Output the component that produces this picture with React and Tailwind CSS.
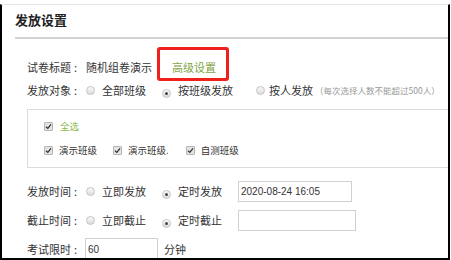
import React from "react";

const font = { fontFamily: '"Noto Sans CJK SC", "Noto Sans", sans-serif' };
const mono = { fontFamily: '"Liberation Sans", Arial, sans-serif' };

function Radio({ checked }) {
  return (
    <span className="relative inline-flex h-[9px] w-[9px] shrink-0 items-center justify-center rounded-full border border-[#c4c4c4] bg-gradient-to-b from-[#fafafa] to-[#dcdcdc]">
      {checked && <span className="h-[3px] w-[3px] rounded-full bg-[#444]" />}
    </span>
  );
}

function Check() {
  return (
    <span className="inline-flex h-[9px] w-[9px] shrink-0 items-center justify-center rounded-[1px] border border-[#b5b5b5] bg-[#e4e4e4]">
      <svg width="7" height="7" viewBox="0 0 7 7">
        <path d="M1 3.8 L2.8 5.4 L6 1.4" fill="none" stroke="#333" strokeWidth="1.3" />
      </svg>
    </span>
  );
}

function Label({ children }) {
  return (
    <span className="inline-flex w-[59px] shrink-0">
      <span>{children}</span>
      <span className="ml-[3px]">:</span>
    </span>
  );
}

export default function App() {
  return (
    <div className="h-[260px] w-[451px] overflow-hidden bg-white pt-[4px] text-[#333]" style={font}>
      <div className="h-[256px] w-[450px] overflow-hidden border-x-2 border-b-2 border-t border-black border-t-[#e6e6e6]">
        <div className="pl-[13px] pt-[3px] text-[13px] font-bold leading-[24px] text-[#222]">发放设置</div>
        <div className="ml-[13px] mt-[5px] h-[2px] bg-[#d2d2d2]" />

        <div className="ml-[25px] mt-[17px] flex h-[22px] items-center text-[11px]">
          <Label>试卷标题</Label>
          <span>随机组卷演示</span>
          <span className="relative ml-[20px] text-[#7fa546]">
            高级设置
            <span className="absolute left-[-15px] top-[-12px] h-[34px] w-[72px] rounded-[3px] border-[3px] border-[#f0201c]" />
          </span>
        </div>

        <div className="ml-[25px] mt-[1px] flex h-[22px] items-center text-[11px]">
          <Label>发放对象</Label>
          <span className="mr-[7px]"><Radio /></span>
          <span>全部班级</span>
          <span className="ml-[16px] mr-[7px]"><Radio checked /></span>
          <span>按班级发放</span>
          <span className="ml-[23px] mr-[4px]"><Radio /></span>
          <span>按人发放</span>
          <span className="ml-[2px] whitespace-nowrap text-[8.5px] text-[#999]">（每次选择人数不能超过500人）</span>
        </div>

        <div className="ml-[25px] mt-[8px] h-[59px] border border-r-0 border-[#dcdcdc] pl-[16px] text-[9.5px]">
          <div className="mt-[8px] flex h-[16px] items-center">
            <Check />
            <span className="ml-[7px] text-[#8cba4c]">全选</span>
          </div>
          <div className="mt-[8px] flex h-[16px] items-center">
            <Check />
            <span className="ml-[6px]">演示班级</span>
            <span className="ml-[16px]"><Check /></span>
            <span className="ml-[6px]">演示班级.</span>
            <span className="ml-[17px]"><Check /></span>
            <span className="ml-[6px]">自测班级</span>
          </div>
        </div>

        <div className="ml-[25px] mt-[13px] flex h-[21px] items-center text-[11px]">
          <Label>发放时间</Label>
          <span className="mr-[7px]"><Radio /></span>
          <span>立即发放</span>
          <span className="ml-[16px] mr-[7px]"><Radio checked /></span>
          <span>定时发放</span>
          <span className="ml-[16px] flex h-[21px] w-[114px] items-center border border-[#d0d0d0] pl-[2px] text-[10px]" style={mono}>
            2020-08-24 16:05
          </span>
        </div>

        <div className="ml-[25px] mt-[8px] flex h-[21px] items-center text-[11px]">
          <Label>截止时间</Label>
          <span className="mr-[7px]"><Radio /></span>
          <span>立即截止</span>
          <span className="ml-[16px] mr-[7px]"><Radio checked /></span>
          <span>定时截止</span>
          <span className="ml-[16px] h-[21px] w-[118px] border border-[#d0d0d0]" />
        </div>

        <div className="ml-[25px] mt-[7px] flex h-[22px] items-center text-[11px]">
          <Label>考试限时</Label>
          <span className="-ml-[1px] flex h-[22px] w-[73px] items-center border border-[#d0d0d0] pl-[2px] text-[10px]" style={mono}>
            60
          </span>
          <span className="ml-[6px]">分钟</span>
        </div>
      </div>
    </div>
  );
}
